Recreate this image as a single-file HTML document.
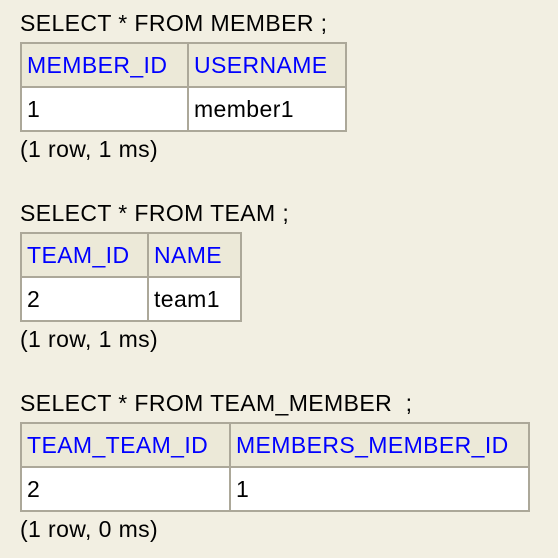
<!DOCTYPE html>
<html><head><style>
body{margin:0;width:558px;height:558px;background:#f2efe2;font-family:"Liberation Sans",Arial,sans-serif;font-size:23px;letter-spacing:0.4px;color:#000;position:relative;overflow:hidden}
.q{position:absolute;left:20px;line-height:26px;white-space:pre}
table{position:absolute;left:20px;border-collapse:collapse}
td,th{border:2px solid #aca899;height:42px;padding:0 0 0 5px;text-align:left;font-weight:normal;white-space:nowrap}
th{background:#ece9d8;color:#0000ff}
td{background:#fff}
</style></head><body>
<div class="q" style="top:10px">SELECT * FROM MEMBER ;</div>
<table style="top:42px;width:327px"><tr><th style="width:160px">MEMBER_ID</th><th>USERNAME</th></tr><tr><td>1</td><td>member1</td></tr></table>
<div class="q" style="top:136px">(1 row, 1 ms)</div>

<div class="q" style="top:200px">SELECT * FROM TEAM ;</div>
<table style="top:232px;width:222px"><tr><th style="width:120px">TEAM_ID</th><th>NAME</th></tr><tr><td>2</td><td>team1</td></tr></table>
<div class="q" style="top:326px">(1 row, 1 ms)</div>

<div class="q" style="top:390px">SELECT * FROM TEAM_MEMBER  ;</div>
<table style="top:422px;width:510px"><tr><th style="width:202px">TEAM_TEAM_ID</th><th>MEMBERS_MEMBER_ID</th></tr><tr><td>2</td><td>1</td></tr></table>
<div class="q" style="top:516px">(1 row, 0 ms)</div>
</body></html>
